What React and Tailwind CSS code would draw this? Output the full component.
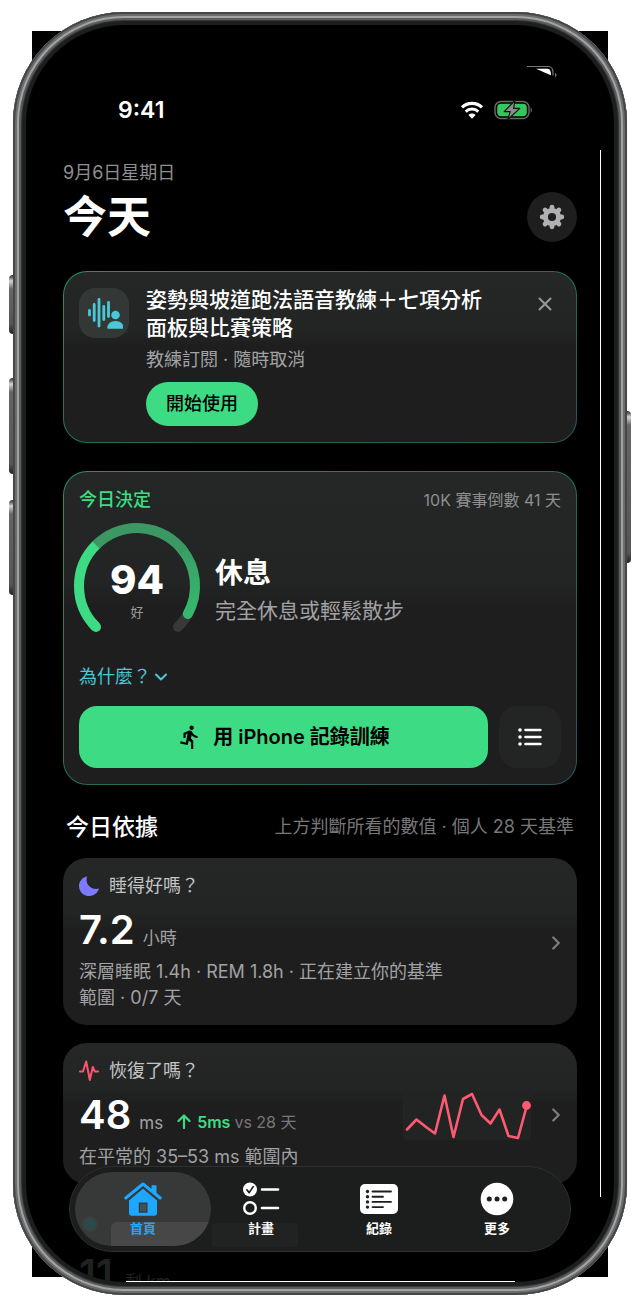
import { MdDirectionsRun } from 'react-icons/md'
import { ChevronDown, ChevronRight, X } from 'lucide-react'

/* ── Icons ────────────────────────────────────────────── */
function WifiIcon() {
  return (
    <svg width="24" height="18" viewBox="0 0 24 18" fill="none">
      <path d="M2 6.4a14.4 14.4 0 0 1 20 0" stroke="#fff" strokeWidth="3.2" />
      <path d="M5.7 10.6a9 9 0 0 1 12.6 0" stroke="#fff" strokeWidth="3" />
      <path d="M12 17.8 8.4 14a5.2 5.2 0 0 1 7.2 0z" fill="#fff" />
    </svg>
  )
}

function BatteryIcon() {
  return (
    <svg width="39" height="20" viewBox="0 0 39 20" fill="none">
      <rect x="1" y="1.5" width="34" height="17" rx="6" stroke="#6b6b6b" strokeWidth="1.4" />
      <rect x="3.2" y="3.8" width="29.6" height="12.4" rx="4" fill="#34c759" />
      <path d="M36.6 7.4c1.7.6 1.7 4.6 0 5.2z" fill="#6b6b6b" />
      <path
        d="M21 .5 10.200 11.600h6l-2.400 8L25.800 8.400h-6.200z"
        fill="#8d8d8f"
        stroke="#111"
        strokeWidth="1.2"
        strokeLinejoin="round"
      />
    </svg>
  )
}

const TEETH = [0, 45, 90, 135, 180, 225, 270, 315]

function GearIcon() {
  return (
    <svg width="26" height="26" viewBox="0 0 26 26" fill="none">
      <circle cx="13" cy="13" r="6.6" stroke="#b0b0b3" strokeWidth="5" />
      {TEETH.map((deg) => (
        <path
          key={deg}
          d="M13 3.2V6"
          stroke="#b0b0b3"
          strokeWidth="4.8"
          strokeLinecap="round"
          transform={`rotate(${deg} 13 13)`}
        />
      ))}
    </svg>
  )
}

function CoachIcon() {
  return (
    <svg width="38" height="34" viewBox="0 0 38 34" fill="none">
      <g stroke="#4ac8d8" strokeWidth="2.8" strokeLinecap="round">
        <path d="M4.500 14.500v4.500M9.200 8.500v16M14 3.500v26.500M18.800 10.500v13M23.500 6.500v14" />
      </g>
      <circle cx="30.500" cy="19" r="4.300" fill="#4ac8d8" />
      <path d="M22.300 32c0-4.200 3.400-7 8.200-7s8.200 2.800 8.200 7c0 .4-.3.700-.8.700H23.100c-.5 0-.8-.3-.8-.7z" fill="#4ac8d8" />
    </svg>
  )
}

function ListIcon() {
  return (
    <svg width="24" height="18" viewBox="0 0 24 18" fill="#fff">
      {[2, 9, 16].map((y) => (
        <g key={y}>
          <circle cx="2" cy={y} r="1.8" />
          <rect x="6.2" y={y - 1.3} width="17.5" height="2.6" rx="1.3" />
        </g>
      ))}
    </svg>
  )
}

function MoonIcon() {
  return (
    <svg width="20" height="20" viewBox="0 0 20 20" fill="#7d7aff">
      <path d="M7.600.4c.3-.1.500.2.400.5-2 6.300 2.600 12 9.500 12 .7 0 1.300-.1 1.900-.3.300-.1.600.2.500.5C18.500 17.200 14.700 20 10.300 20 4.600 20 0 15.500 0 9.900 0 5.400 3.300 1.500 7.600.4z" />
    </svg>
  )
}

function PulseIcon() {
  return (
    <svg width="20" height="22" viewBox="0 0 20 22" fill="none">
      <path
        d="M1 11.500h3l3.200-10 3.600 18.500L13.800 7l2 4.500H19"
        stroke="#ff5470"
        strokeWidth="2"
        strokeLinecap="round"
        strokeLinejoin="round"
      />
    </svg>
  )
}

function HomeIcon() {
  return (
    <svg width="38" height="34" viewBox="0 0 38 34" fill="#1ea7ff">
      <path d="M19 6 33 17.800V31c0 1.700-1 2.700-2.700 2.700H7.700C6 33.700 5 32.700 5 31V17.800z" />
      <path d="M1.800 16.500 19 2l17.200 14.500" fill="none" stroke="#363938" strokeWidth="7" />
      <path d="M27.500 4.500c0-.8.400-1.200 1.200-1.200h2.600c.8 0 1.200.4 1.200 1.200v8l-5-4z" />
      <path d="M1.800 16 19 2l17.200 14" fill="none" stroke="#1ea7ff" strokeWidth="3" strokeLinecap="round" strokeLinejoin="round" />
      <path d="M14.800 20.500h8.700v10.200h-8.700z" fill="#363938" />
      <path d="M16 21.700h6.300v7.800H16z" fill="#3f5058" />
    </svg>
  )
}

function PlanIcon() {
  return (
    <svg width="37" height="34" viewBox="0 0 37 34" fill="none">
      <circle cx="7" cy="7.500" r="7" fill="#fff" />
      <path d="m3.800 7.800 2.400 2.800 4-6" stroke="#1e1e1e" strokeWidth="1.7" strokeLinecap="round" strokeLinejoin="round" />
      <circle cx="7" cy="26" r="5.8" stroke="#fff" strokeWidth="2.4" />
      <path d="M19 7.500h16M19 26h16" stroke="#fff" strokeWidth="2.6" strokeLinecap="round" />
    </svg>
  )
}

function RecordIcon() {
  return (
    <svg width="38" height="30" viewBox="0 0 38 30" fill="none">
      <rect width="38" height="30" rx="5" fill="#fff" />
      <g fill="#1e1e1e">
        <circle cx="7.5" cy="7.5" r="1.7" />
        <circle cx="7.5" cy="12.7" r="1.7" />
        <circle cx="7.5" cy="17.9" r="1.7" />
        <circle cx="7.5" cy="23.1" r="1.7" />
      </g>
      <path d="M12.500 7.500H31M12.500 12.700h10.500M12.500 17.900H31M12.500 23.100h10.500" stroke="#1e1e1e" strokeWidth="1.9" strokeLinecap="round" />
    </svg>
  )
}

function MoreIcon() {
  return (
    <svg width="34" height="34" viewBox="0 0 34 34" fill="#1e1e1e">
      <circle cx="17" cy="17" r="16.3" fill="#fff" />
      <circle cx="9.3" cy="17" r="2.5" />
      <circle cx="17" cy="17" r="2.5" />
      <circle cx="24.7" cy="17" r="2.5" />
    </svg>
  )
}

/* ── Charts ───────────────────────────────────────────── */
const RADIUS = 58

function arc(from, to) {
  const point = (deg) => {
    const rad = (deg * Math.PI) / 180
    return `${58 + RADIUS * Math.cos(rad)} ${58 + RADIUS * Math.sin(rad)}`
  }
  return `M${point(from)}A${RADIUS} ${RADIUS} 0 ${to - from > 180 ? 1 : 0} 1 ${point(to)}`
}

function ScoreGauge({ score, label }) {
  return (
    <div className="relative size-[116px] shrink-0">
      <svg className="overflow-visible" width="116" height="116" viewBox="0 0 116 116" fill="none" strokeWidth="10">
        <defs>
          <linearGradient id="gaugeTail" x1="0" y1="0" x2="0" y2="1">
            <stop offset="0%" stopColor="#3a9f66" />
            <stop offset="100%" stopColor="#36b86e" />
          </linearGradient>
        </defs>
        <path d={arc(135, 405)} stroke="#363938" strokeLinecap="round" />
        <path d={arc(320, 135 + 2.7 * score)} stroke="url(#gaugeTail)" strokeLinecap="round" />
        <path d={arc(224, 324)} stroke="#3b9863" />
        <path d={arc(135, 140)} stroke="#3ddc84" strokeLinecap="round" />
        <path d={arc(135, 225)} stroke="#3ddc84" />
      </svg>
      <div className="absolute inset-0 flex flex-col items-center justify-center pt-2">
        <span className="text-[40px] leading-11 font-extrabold text-white">{score}</span>
        <span className="text-[13px] leading-5 text-[#9c9c9f]">{label}</span>
      </div>
    </div>
  )
}

function Sparkline() {
  return (
    <svg className="shrink-0 rounded-sm bg-[#212423]" width="128" height="50" viewBox="0 0 128 50" fill="none">
      <path
        d="M4 39.500 13.500 29.500 23 37 32 43.500 41.500 5.500 50.500 47 60 9 69 4 78.500 25 87.500 33.500 96.500 19.500 105.500 46 115 48 124 15"
        stroke="#ff5a72"
        strokeWidth="2.6"
        strokeLinejoin="round"
        strokeLinecap="round"
      />
      <circle cx="123.500" cy="15.500" r="4.4" fill="#ff5a72" />
    </svg>
  )
}

/* ── Cards ────────────────────────────────────────────── */
function GlowCard({ className, children }) {
  return (
    <section className={`rounded-3xl bg-linear-to-br from-[#2f8f5b] via-[#276e4f] to-[#2b525a] p-px ${className}`}>
      <div className="rounded-[23px] bg-[linear-gradient(#242726,#222524_35%,#1e1e1e_43%)] px-[15px] py-4">{children}</div>
    </section>
  )
}

function MetricCard({ icon, title, value, unit, extra, chart, children }) {
  return (
    <section className="flex shrink-0 items-center rounded-3xl bg-[linear-gradient(#242726,#222524_33%,#1e1e1e_43%)] px-4 pt-4 pb-[14px]">
      <div className="min-w-0 flex-1">
        <h3 className="flex items-center gap-[10px] text-lg leading-6 text-[#c4c4c6]">
          {icon}
          {title}
        </h3>
        <p className="mt-[10px] flex h-11 items-baseline gap-2 leading-11">
          <span className="text-[40px] font-semibold text-white">{value}</span>
          <span className="text-[17px] leading-11 text-[#a2a2a5]">{unit}</span>
          {extra}
        </p>
        <p className="mt-[7px] text-lg leading-[26px] whitespace-nowrap text-[#a2a2a5]">{children}</p>
      </div>
      {chart}
      <ChevronRight className="-mr-1.5 ml-[14px] shrink-0 text-[#7c7c7f]" size={22} strokeWidth={2.5} />
    </section>
  )
}

/* ── Tab bar ──────────────────────────────────────────── */
const TABS = [
  { label: '首頁', icon: <HomeIcon />, active: true },
  { label: '計畫', icon: <PlanIcon /> },
  { label: '紀錄', icon: <RecordIcon /> },
  { label: '更多', icon: <MoreIcon /> },
]

function TabBar() {
  return (
    <nav className="absolute inset-x-[43px] bottom-[30px] flex rounded-full border border-[#2c302f] bg-[#1c1d1d] px-[14px] py-[5px]">
      <span className="absolute bottom-1 left-[142px] h-6 w-[86px] rounded-sm bg-[#202322]" />
      {TABS.map((tab) => (
        <button key={tab.label} className="relative flex flex-1 flex-col items-center pt-[9px] pb-[7px]">
          {tab.active && (
            <span className="absolute -inset-x-[9px] inset-y-0 overflow-hidden rounded-full bg-[#363938]">
              <span className="absolute bottom-4 left-[9px] size-3 rounded-full bg-[#2c4a4c] ring-2 ring-[#3b3f40]" />
              <span className="absolute right-0 bottom-0 left-9 h-6 rounded-tl-md bg-[#474747]" />
            </span>
          )}
          <span className="relative flex h-[36px] items-center">{tab.icon}</span>
          <span className={`relative text-[13px] leading-[22px] font-bold ${tab.active ? 'text-[#1ea7ff]' : 'text-white'}`}>
            {tab.label}
          </span>
        </button>
      ))}
    </nav>
  )
}

/* ── Today screen ─────────────────────────────────────── */
function TodayScreen() {
  return (
    <div className="relative flex flex-1 flex-col overflow-hidden rounded-[98px] bg-black px-[37px] pt-[67px]">
      <div className="flex h-9 shrink-0 items-center justify-between pr-[44px] pl-[55px]">
        <span className="text-[23px] font-semibold text-white">9:41</span>
        <span className="flex items-center gap-[10px]">
          <WifiIcon />
          <BatteryIcon />
        </span>
      </div>
      <svg className="absolute top-10 right-[56px]" width="32" height="14" viewBox="0 0 32 14" fill="none">
        <path d="M1 1.500h21c4 0 5 2.500 5 6v3" stroke="#777" strokeWidth="1.2" />
        <path d="M10 3.700h11c3 0 4 2 4 6.500-5-2-9-4-15-6.500z" fill="#fff" />
        <path d="M29 8c2 .6 2 3.400 0 4z" fill="#777" />
      </svg>

      <header className="mt-[33px] shrink-0">
        <p className="text-lg leading-6 text-[#8f8f92]">9月6日星期日</p>
        <div className="flex h-16 items-center justify-between">
          <h1 className="text-[44px] leading-[62px] font-bold text-white">今天</h1>
          <button aria-label="設定" className="flex size-[50px] items-center justify-center rounded-full bg-[#1e1e1f]">
            <GearIcon />
          </button>
        </div>
      </header>

      <GlowCard className="mt-[22px] shrink-0">
        <div className="flex gap-[17px]">
          <span className="flex size-[50px] shrink-0 items-center justify-center rounded-2xl bg-[#333736]">
            <CoachIcon />
          </span>
          <div className="flex-1">
            <h2 className="-mt-0.5 text-[21px] leading-7 font-medium whitespace-nowrap text-white">
              姿勢與坡道跑法語音教練＋七項分析
              <br />
              面板與比賽策略
            </h2>
            <p className="mt-1.5 text-lg leading-6 text-[#a2a2a5]">教練訂閱 · 隨時取消</p>
            <button className="mt-[10px] rounded-full bg-[#3ddc84] px-5 py-[9px] text-lg leading-[26px] font-medium text-black">
              開始使用
            </button>
          </div>
          <button aria-label="關閉" className="mt-1.5 mr-1.5 flex size-5 items-center justify-center text-[#98989b]">
            <X className="shrink-0" size={22} strokeWidth={2.2} />
          </button>
        </div>
      </GlowCard>

      <GlowCard className="mt-7 shrink-0">
        <div className="flex items-center justify-between leading-6">
          <h2 className="text-lg leading-6 font-medium text-[#3ddc84]">今日決定</h2>
          <span className="text-base leading-6 text-[#8f8f92]">10K 賽事倒數 41 天</span>
        </div>
        <div className="mt-4 flex items-center gap-5">
          <ScoreGauge score={94} label="好" />
          <div className="pt-[10px]">
            <p className="text-[28px] leading-10 font-bold text-white">休息</p>
            <p className="text-[21px] leading-9 text-[#a2a2a5]">完全休息或輕鬆散步</p>
          </div>
        </div>
        <button className="mt-[21px] flex items-center text-lg leading-6 text-[#4ac8d8]">
          為什麼？
          <ChevronDown size={20} strokeWidth={2.5} />
        </button>
        <div className="mt-[17px] flex gap-[11px]">
          <button className="flex h-[62px] flex-1 items-center justify-center gap-[10px] rounded-[18px] bg-[#3ddc84] text-xl font-semibold text-black">
            <MdDirectionsRun size={26} />
            用 iPhone 記錄訓練
          </button>
          <button aria-label="清單" className="flex size-[62px] items-center justify-center rounded-[18px] bg-[#222524]">
            <ListIcon />
          </button>
        </div>
      </GlowCard>

      <div className="mt-6 mb-[13px] flex shrink-0 items-center justify-between px-[3px] leading-9">
        <h2 className="text-[23px] font-medium text-white">今日依據</h2>
        <span className="text-lg leading-9 text-[#77777a]">上方判斷所看的數值 · 個人 28 天基準</span>
      </div>

      <div className="flex flex-col gap-[18px]">
        <MetricCard icon={<MoonIcon />} title="睡得好嗎？" value="7.2" unit="小時">
          深層睡眠 1.4h · REM 1.8h · 正在建立你的基準
          <br />
          範圍 · 0/7 天
        </MetricCard>
        <MetricCard
          icon={<PulseIcon />}
          title="恢復了嗎？"
          value="48"
          unit="ms"
          extra={
            <span className="ml-1.5 flex items-center text-base leading-11 text-[#77777a]">
              <svg className="mr-1.5" width="14" height="15" viewBox="0 0 14 15" fill="none">
                <path d="M7 14V1.500M1.500 7 7 1.500 12.500 7" stroke="#3ddc84" strokeWidth="2.2" strokeLinecap="round" strokeLinejoin="round" />
              </svg>
              <b className="mr-1 font-semibold text-[#3ddc84]">5ms</b>vs 28 天
            </span>
          }
          chart={<Sparkline />}
        >
          在平常的 35–53 ms 範圍內
        </MetricCard>
        <section className="px-4 pt-[50px] text-[#1f2221]">
          <p className="flex h-11 items-baseline gap-3 leading-11">
            <span className="text-[40px] font-semibold">11</span>
            <span className="text-[17px] leading-11">剩 km</span>
          </p>
        </section>
      </div>

      <span className="absolute top-[125px] right-[13px] bottom-[85px] w-px bg-white" />
      <span className="absolute right-[99px] bottom-0 left-[100px] h-px bg-white" />
      <TabBar />
    </div>
  )
}

/* ── Device frame ─────────────────────────────────────── */
function SideKey({ className }) {
  return (
    <span className={`absolute w-[5px] bg-[linear-gradient(#222,#d5d5d5_6px,#666_14px,#555_calc(100%-10px),#222)] ${className}`} />
  )
}

export default function App() {
  return (
    <div className="relative flex h-screen flex-col overflow-hidden bg-white px-[13px] pt-3 pb-[13px] font-['Inter','Noto_Sans_CJK_TC',sans-serif]">
      <div className="absolute inset-x-8 inset-y-[31px] bg-black" />
      <SideKey className="top-[275px] left-[9px] h-[59px] rounded-l-sm" />
      <SideKey className="top-[378px] left-[9px] h-[96px] rounded-l-sm" />
      <SideKey className="top-[500px] left-[9px] h-[95px] rounded-l-sm" />
      <SideKey className="top-[411px] right-[9px] h-[152px] rounded-r-sm" />
      <div className="relative flex min-h-0 flex-1 flex-col rounded-[111px] bg-[#1c1f1e] p-[13px] shadow-[inset_0_0_0_2px_#454747,inset_0_0_0_4px_#6b6c6e,inset_0_0_0_6px_#a2a3a5,inset_0_0_0_8px_#5a5b5d,inset_0_0_0_9px_#363838]">
        <TodayScreen />
      </div>
    </div>
  )
}
